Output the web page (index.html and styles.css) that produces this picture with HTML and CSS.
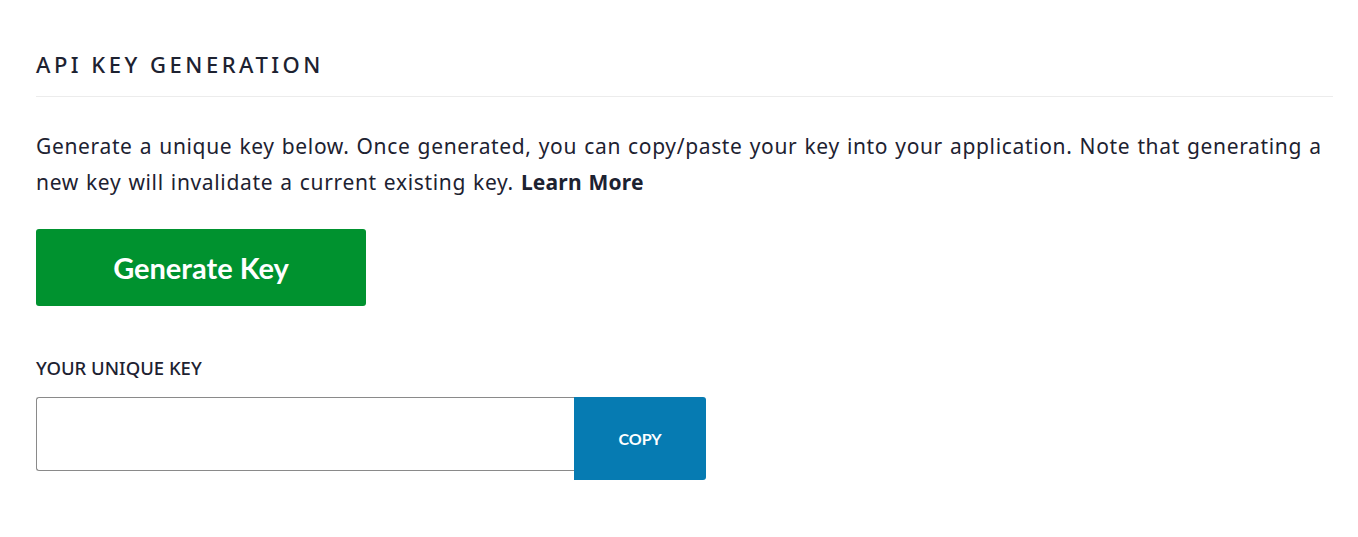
FILE: index.html
```html
<!DOCTYPE html>
<html lang="en">
<head>
  <meta charset="UTF-8" />
  <title>API Key Generation</title>
  <link rel="stylesheet" href="styles.css">
</head>
<body>
  <div class="panel">
    <h2 class="panel-title">API KEY GENERATION</h2>

    <p class="intro">Generate a unique key below. Once generated, you can copy/paste your key into your application. Note that generating a new key will invalidate a current existing key. <a href="#" class="learn">Learn More</a></p>

    <button class="generate">Generate Key</button>

    <label class="key-label" for="apikey">YOUR UNIQUE KEY</label>
    <div class="key-row">
      <input type="text" id="apikey" class="key-input" readonly>
      <button class="copy">COPY</button>
    </div>
  </div>
</body>
</html>
```

FILE: styles.css
```css
body { margin: 0; background: #fff; font-family: "Noto Sans", "Open Sans", sans-serif; color: #1d2231; }
.panel { padding: 50px 25px 0 36px; }
.panel-title { margin: 0; font-size: 22px; font-weight: 500; letter-spacing: 3.5px; color: #1d2231;
               padding-bottom: 18px; border-bottom: 1px solid #ececec; line-height: 28px; }
.intro { margin: 31px 0 0; font-size: 21px; line-height: 36px; letter-spacing: 0.65px; word-spacing: 1px; }
.learn { color: #1d2231; font-weight: 700; text-decoration: none; letter-spacing: 0.2px; }
.generate { display: block; margin-top: 29px; width: 330px; height: 77px; background: #00922f; color: #fff;
            border: none; border-radius: 3px; font-family: Lato, sans-serif; font-weight: 700; font-size: 29px; cursor: pointer; }
.key-label { display: block; margin-top: 49px; font-size: 18.5px; font-weight: 500; }
.key-row { display: flex; align-items: flex-start; margin-top: 17px; }
.key-input { width: 538px; height: 74px; box-sizing: border-box; border: 1px solid #8a8a8a; border-right: none;
             border-radius: 3px 0 0 3px; padding: 0 12px; font-size: 16px; outline: none; }
.copy { width: 132px; height: 83px; background: #067bb2; color: #fff; border: none; border-radius: 0 3px 3px 0;
        font-family: Lato, sans-serif; font-weight: 700; font-size: 16px; cursor: pointer; }
```
